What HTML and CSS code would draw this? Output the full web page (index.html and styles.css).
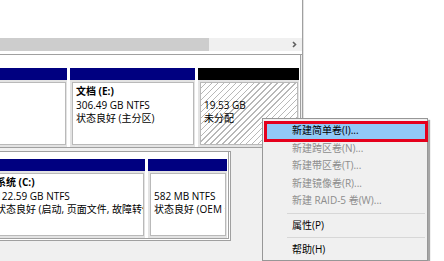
FILE: index.html
```html
<!DOCTYPE html>
<html lang="zh-CN">
  <head>
    <meta charset="UTF-8" />
    <title>磁盘管理</title>
    <link rel="stylesheet" href="styles.css">
  </head>
  <body>
    <div class="window">
      <div class="console">
        <div class="list"></div>
        <div class="hscroll">
          <div class="thumb"></div>
          <svg class="arrow" width="5" height="7" viewBox="0 0 5 7"><polyline points="1,1 3.5,3.5 1,6" fill="none" stroke="#606060" stroke-width="1.6"/></svg>
        </div>
        <div class="graph">
          <div class="disk disk-1">
            <div class="part w-a">
              <div class="bar"></div>
              <div class="body"><div class="info">
                <p class="name">&nbsp;</p>
                <p>499 MB NTFS</p>
                <p>状态良好</p>
              </div></div>
            </div>
            <div class="part w-b">
              <div class="bar"></div>
              <div class="body"><div class="info">
                <p class="name">文档 (E:)</p>
                <p>306.49 GB NTFS</p>
                <p>状态良好 (主分区)</p>
              </div></div>
            </div>
            <div class="part w-c">
              <div class="bar free"></div>
              <div class="body"><div class="info hatch">
                <p class="name">&nbsp;</p>
                <p>19.53 GB</p>
                <p>未分配</p>
              </div></div>
            </div>
          </div>
          <div class="disk disk-2">
            <div class="part w-d">
              <div class="bar"></div>
              <div class="body"><div class="info">
                <p class="name">系统 (C:)</p>
                <p>122.59 GB NTFS</p>
                <p>状态良好 (启动, 页面文件, 故障转储, 主分区)</p>
              </div></div>
            </div>
            <div class="part w-e">
              <div class="bar"></div>
              <div class="body"><div class="info">
                <p class="name">&nbsp;</p>
                <p>582 MB NTFS</p>
                <p>状态良好 (OEM 分区)</p>
              </div></div>
            </div>
          </div>
        </div>
      </div>
      <div class="divider"></div>
      <div class="side"></div>
    </div>

    <div class="menu">
      <div class="item active">新建简单卷(I)...</div>
      <div class="item disabled">新建跨区卷(N)...</div>
      <div class="item disabled">新建带区卷(T)...</div>
      <div class="item disabled">新建镜像卷(R)...</div>
      <div class="item disabled">新建 RAID-5 卷(W)...</div>
      <div class="sep"></div>
      <div class="item">属性(P)</div>
      <div class="sep"></div>
      <div class="item">帮助(H)</div>
    </div>
    <div class="callout"></div>
  </body>
</html>
```

FILE: styles.css
```css
body {
  margin: 0;
  width: 444px;
  height: 261px;
  overflow: hidden;
  background: #fff;
  font-family: "Open Sans", "Noto Sans CJK SC", sans-serif;
  font-size: 10px;
  color: #000;
}

.window {
  display: flex;
  height: 261px;
}

.console {
  width: 302px;
  display: flex;
  flex-direction: column;
  overflow: hidden;
}

.divider {
  width: 1px;
  background: #a0a0a0;
  border-right: 1px solid #e3e3e3;
}

.side {
  flex: 1;
  background: #fff;
}

.list {
  height: 38px;
  flex-shrink: 0;
}

.hscroll {
  height: 13px;
  flex-shrink: 0;
  display: flex;
  align-items: center;
  background: #f0f0f0;
}

.thumb {
  width: 209px;
  height: 100%;
  background: #cdcdcd;
}

.arrow {
  margin-left: auto;
  margin-right: 5px;
}

.graph {
  flex: 1;
  margin-top: 3px;
  background: #f0f0f0;
  border-top: 1px solid #a0a0a0;
  display: flex;
  flex-direction: column;
  gap: 3px;
}

.disk {
  display: flex;
  gap: 3px;
  background: #fff;
  padding-right: 1px;
  border-right: 1px solid #a0a0a0;
  border-bottom: 1px solid #a0a0a0;
  align-self: flex-start;
}

.disk-1 {
  margin-left: -70px;
  padding-top: 13px;
}

.disk-2 {
  margin-left: -10px;
  padding-top: 7px;
  border-top: 1px solid #a0a0a0;
  border-bottom: 3px double #a0a0a0;
  border-right: 3px double #a0a0a0;
}

.w-a { width: 137px; }
.w-b { width: 125px; }
.w-c { width: 101px; }
.w-d { width: 155px; }
.w-e { width: 79px; }

.part {
  display: flex;
  flex-direction: column;
}

.bar {
  height: 12px;
  background: #000080;
}

.bar.free {
  background: #000;
}

.body {
  height: 67px;
  box-sizing: border-box;
  border: 2px solid #e3e3e3;
  border-right-width: 1px;
}

.info {
  height: 100%;
  box-sizing: border-box;
  border: 1px solid #b9b9b9;
  padding: 2px 0 0 3px;
  overflow: hidden;
  white-space: nowrap;
}

.info p {
  margin: 0;
  line-height: 13.5px;
}

.info .name {
  font-weight: bold;
}

.hatch {
  background: repeating-linear-gradient(135deg, #fff 0 3.2px, #b8b8b8 3.2px 4.2px);
}

.menu {
  position: absolute;
  left: 262px;
  top: 118px;
  width: 164px;
  padding: 3px 0 1px;
  background: #f0f0f0;
  border: 1px solid #979797;
  box-shadow: 2px 2px 1px rgba(0, 0, 0, 0.35);
}

.item {
  height: 17.5px;
  line-height: 17.5px;
  padding-left: 27px;
  margin: 0 2px;
}

.item.disabled {
  color: #8d8d8d;
}

.item.active {
  background: #91c9f7;
}

.sep {
  height: 1px;
  background: #d7d7d7;
  margin: 3px 2px 3px 24px;
}

.callout {
  position: absolute;
  left: 264px;
  top: 121px;
  width: 158px;
  height: 15px;
  border: 3px solid #e5001c;
}
```
